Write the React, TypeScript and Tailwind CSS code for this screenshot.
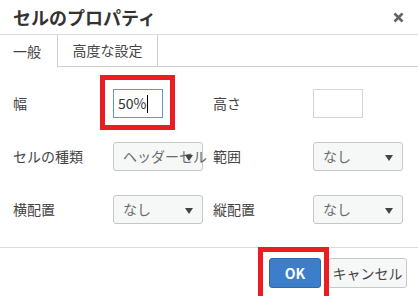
import React from 'react';

const font = { fontFamily: '"Noto Sans CJK JP", "Noto Sans", sans-serif' };

const Arrow: React.FC = () => (
    <svg className="absolute right-[9px] top-[12px]" width="8" height="6" viewBox="0 0 8 6">
        <path d="M0 0h8L4 6z" fill="#444" />
    </svg>
);

const Select: React.FC<{ value: string }> = ({ value }) => (
    <div className="relative h-[29px] w-[90px] rounded-[3px] border border-[#c6c6c6] bg-[#f6f7f7]">
        <span className="absolute left-[9px] top-[3px] whitespace-nowrap text-[14px] text-[#6a6a6a]">{value}</span>
        <Arrow />
    </div>
);

const Label: React.FC<{ children: React.ReactNode; pad?: boolean }> = ({ children, pad }) => (
    <div className={`flex h-[29px] items-center text-[14px] text-[#444] ${pad ? 'pl-[10px]' : ''}`}>{children}</div>
);

const App: React.FC = () => {
    return (
        <div className="relative h-[296px] w-[418px] overflow-hidden bg-white" style={font}>
            {/* header */}
            <div className="flex h-[35px] items-center justify-between border-b border-[#dcdcdc] pl-[13px] pr-[13px]">
                <span className="text-[18px] font-bold leading-none text-[#333]">セルのプロパティ</span>
                <svg width="11" height="11" viewBox="0 0 11 11" className="mr-[1px]">
                    <path d="M1.5 1.5l8 8M9.5 1.5l-8 8" stroke="#666" strokeWidth="2.6" />
                </svg>
            </div>

            {/* tabs */}
            <div className="flex h-[32px] text-[14px] text-[#444]">
                <div className="flex w-[58px] items-center border-r border-[#cfcfcf] pl-[13px]">一般</div>
                <div className="flex w-[100px] items-center justify-center border-b border-r border-[#cfcfcf]">高度な設定</div>
                <div className="flex-1 border-b border-[#cfcfcf]" />
            </div>

            {/* body */}
            <div className="grid h-[181px] grid-cols-[100px_90px_110px_90px] content-start gap-y-[24px] border-b border-[#dcdcdc] pl-[13px] pt-[22px]">
                <Label>幅</Label>
                <div className="flex h-[29px] w-[50px] items-center border border-[#5b9bd5] pl-[4px] text-[14px] text-[#333]">
                    50%<span className="ml-[1px] h-[18px] w-[1px] bg-black" />
                </div>
                <Label pad>高さ</Label>
                <div className="h-[29px] w-[50px] border border-[#d4d4d4]" />

                <Label>セルの種類</Label>
                <Select value="ヘッダーセル" />
                <Label pad>範囲</Label>
                <Select value="なし" />

                <Label>横配置</Label>
                <Select value="なし" />
                <Label pad>縦配置</Label>
                <Select value="なし" />
            </div>

            {/* footer */}
            <div className="flex justify-end gap-[7px] pr-[11px] pt-[10px]">
                <button className="h-[30px] w-[52px] rounded-[3px] border border-[#2d69ad] bg-[#3c7ec9] text-[14px] font-bold text-white">OK</button>
                <button className="h-[30px] w-[79px] rounded-[3px] border border-[#c8c8c8] bg-[#f6f7f7] text-[14px] text-[#444]">キャンセル</button>
            </div>

            {/* highlight marks */}
            <div className="absolute left-[100px] top-[75px] h-[55px] w-[75px] border-[5px] border-[#ec1c24]" />
            <div className="absolute left-[258px] top-[247px] h-[54px] w-[71px] border-[5px] border-[#ec1c24]" />
        </div>
    );
};

export default App;
